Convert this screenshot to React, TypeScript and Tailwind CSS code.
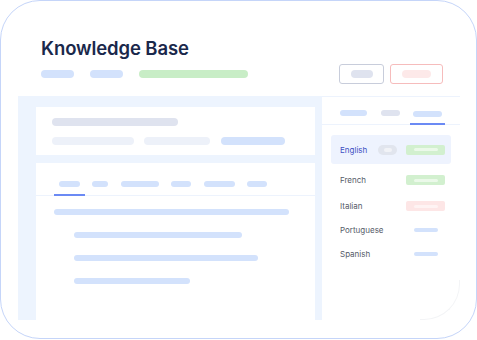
export default function App() {
  const blue = "bg-[#d3e2fc]";
  return (
    <div className="w-[477px] h-[340px] bg-white" style={{ fontFamily: "Inter, 'Noto Sans', sans-serif" }}>
      <div className="w-[477px] h-[339px] border border-[#c5d5f9] rounded-[40px] pt-[35px] flex flex-col overflow-hidden">
        {/* header */}
        <div className="flex items-end justify-between pl-[40px] pr-[33px]">
          <div className="flex flex-col">
            <div className="text-[18.5px] leading-[24px] font-semibold text-[#1a284b] tracking-[-0.1px]">Knowledge Base</div>
            <div className="flex items-center mt-[10px] h-[8px]">
              <div className={`w-[33px] h-[8px] rounded-full ${blue}`} />
              <div className={`w-[33px] h-[8px] rounded-full ${blue} ml-[16px]`} />
              <div className="w-[109px] h-[8px] rounded-full bg-[#c8edc6] ml-[16px]" />
            </div>
          </div>
          <div className="flex items-center gap-[6px] mb-[-6px]">
            <div className="w-[45px] h-[20px] border border-[#c8cddb] rounded-[3px] flex items-center justify-center">
              <div className="w-[22px] h-[8px] rounded-full bg-[#dfe3ef]" />
            </div>
            <div className="w-[53px] h-[20px] border border-[#f6bcbc] rounded-[3px] flex items-center justify-center">
              <div className="w-[29px] h-[8px] rounded-full bg-[#fde9e9]" />
            </div>
          </div>
        </div>
        {/* main panel */}
        <div className="ml-[17px] mt-[18px] w-[442px] h-[224px] flex">
          <div className="w-[304px] h-full bg-[#edf4fe] pl-[18px] pr-[7px] pt-[11px] flex flex-col gap-[8px]">
            <div className="h-[48px] bg-white pl-[16px] pt-[11px]">
              <div className="w-[126px] h-[8px] rounded-full bg-[#dfe3ef]" />
              <div className="flex mt-[11px]">
                <div className="w-[82px] h-[8px] rounded-full bg-[#edf1f9]" />
                <div className="w-[66px] h-[8px] rounded-full bg-[#edf1f9] ml-[10px]" />
                <div className={`w-[64px] h-[8px] rounded-full ${blue} ml-[11px]`} />
              </div>
            </div>
            <div className="flex-1 bg-white">
              <div className="flex items-end pl-[18px] border-b border-[#edf3fd] h-[33px]">
                <div className="px-[5px] pb-[7px] border-b-2 border-[#6b8af4] mb-[-1px]">
                  <div className={`w-[21px] h-[6px] rounded-full ${blue}`} />
                </div>
                <div className="flex items-center gap-[12.5px] ml-[7px] pb-[8px]">
                  <div className={`w-[16px] h-[6px] rounded-full ${blue}`} />
                  <div className={`w-[38px] h-[6px] rounded-full ${blue}`} />
                  <div className={`w-[20px] h-[6px] rounded-full ${blue}`} />
                  <div className={`w-[31px] h-[6px] rounded-full ${blue}`} />
                  <div className={`w-[20px] h-[6px] rounded-full ${blue}`} />
                </div>
              </div>
              <div className="pl-[18px] pt-[13px] flex flex-col">
                <div className={`w-[235px] h-[6px] rounded-full ${blue}`} />
                <div className={`w-[168px] h-[6px] rounded-full ${blue} ml-[20px] mt-[17px]`} />
                <div className={`w-[184px] h-[6px] rounded-full ${blue} ml-[20px] mt-[17px]`} />
                <div className={`w-[116px] h-[6px] rounded-full ${blue} ml-[20px] mt-[17px]`} />
              </div>
            </div>
          </div>
          <div className="w-[138px] h-full bg-white border-t-[1.5px] border-[#edf3fd] rounded-br-[36px] relative">
            <div className="absolute right-0 bottom-0 w-[40px] h-[40px] rounded-br-[36px] border-r border-b border-[#f3f4f6] pointer-events-none" />
            <div className="flex items-end pl-[18px] h-[28px] border-b border-[#edf3fd]">
              <div className={`w-[27px] h-[6px] rounded-full ${blue} mb-[8px]`} />
              <div className="w-[19px] h-[6px] rounded-full bg-[#dfe3ef] ml-[14px] mb-[8px]" />
              <div className="px-[3px] pb-[6px] border-b-2 border-[#6b8af4] ml-[10px] mb-[-1px]">
                <div className={`w-[29px] h-[6px] rounded-full ${blue}`} />
              </div>
            </div>
            <div className="px-[9px] pt-[10px] flex flex-col">
              <div className="h-[29px] bg-[#eef3fe] rounded-[3px] flex items-center pl-[9px] pr-[6px]">
                <span className="text-[8px] text-[#3d4fc3] leading-none">English</span>
                <div className="ml-auto w-[19px] h-[10px] rounded-full bg-[#e1e5ee] flex items-center justify-center">
                  <div className="w-[8px] h-[4px] rounded-full bg-[#f1f3f7]" />
                </div>
                <div className="ml-[9px] w-[39px] h-[10px] rounded-[2px] bg-[#d2f0cf] flex items-center justify-center">
                  <div className="w-[24px] h-[3px] rounded-full bg-[#ebf9e9]" />
                </div>
              </div>
              {[
                { name: "French", kind: "green", mt: "mt-[4px]" },
                { name: "Italian", kind: "red", mt: "mt-[2px]" },
                { name: "Portuguese", kind: "line", mt: "mt-0" },
                { name: "Spanish", kind: "line", mt: "mt-0" },
              ].map((r) => (
                <div key={r.name} className={`h-[24px] flex items-center pl-[9px] pr-[6px] ${r.mt}`}>
                  <span className="text-[8px] text-[#555b68] leading-none">{r.name}</span>
                  <div className="ml-auto w-[39px] flex items-center justify-center">
                    {r.kind === "green" && (
                      <div className="w-[39px] h-[10px] rounded-[2px] bg-[#d2f0cf] flex items-center justify-center">
                        <div className="w-[24px] h-[3px] rounded-full bg-[#ebf9e9]" />
                      </div>
                    )}
                    {r.kind === "red" && (
                      <div className="w-[39px] h-[10px] rounded-[2px] bg-[#fde6e6] flex items-center justify-center">
                        <div className="w-[24px] h-[3px] rounded-full bg-[#fef3f3]" />
                      </div>
                    )}
                    {r.kind === "line" && <div className={`w-[24px] h-[4px] rounded-full ${blue}`} />}
                  </div>
                </div>
              ))}
            </div>
          </div>
        </div>
      </div>
    </div>
  );
}
